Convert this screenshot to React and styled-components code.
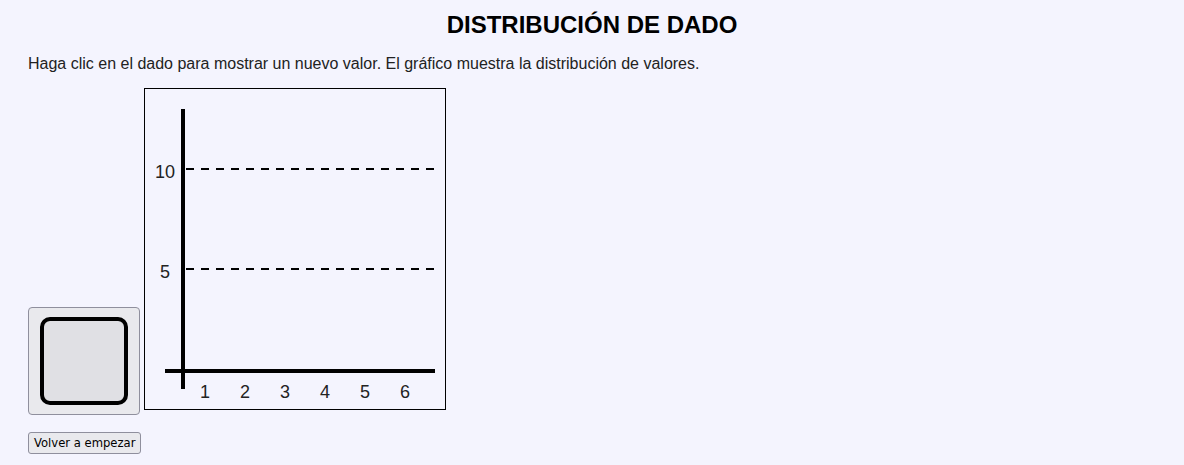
import React from "react";
import styled, { createGlobalStyle } from "styled-components";

const Global = createGlobalStyle`
  html, body { margin: 0; padding: 0; background: #f4f4fe; }
  body { font-family: "Liberation Sans", Arial, sans-serif; color: #000; }
`;

const Page = styled.div`
  padding: 0 28px;
  display: flex;
  flex-direction: column;
  align-items: flex-start;
`;

const Title = styled.h1`
  align-self: stretch;
  margin: 11px 0 0;
  font-size: 24px;
  font-weight: bold;
  line-height: 28px;
  text-align: center;
  color: #000;
`;

const Intro = styled.p`
  margin: 16px 0 0;
  font-size: 16px;
  line-height: 18px;
  color: #222;
`;

const Row = styled.div`
  margin-top: 15px;
  display: flex;
  align-items: flex-end;
  gap: 4px;
`;

const DieButton = styled.button`
  width: 112px;
  height: 108px;
  padding: 0;
  display: flex;
  align-items: center;
  justify-content: center;
  background: #e9e9ed;
  border: 1px solid #8f8f9d;
  border-radius: 4px;
  cursor: pointer;
`;

const ChartBox = styled.div`
  width: 300px;
  height: 320px;
  border: 1px solid #000;
  margin-bottom: 5px;
  & > svg { display: block; }
`;

const ResetButton = styled.button`
  margin-top: 17px;
  height: 22px;
  padding: 0 5px;
  font-family: "DejaVu Sans", sans-serif;
  font-size: 11.6px;
  color: #000;
  background: #e9e9ed;
  border: 1px solid #8f8f9d;
  border-radius: 3px;
  cursor: pointer;
`;

const AxisText = styled.text`
  font-family: "Liberation Sans", Arial, sans-serif;
  font-size: 18px;
  fill: #222;
`;

const Die = () => (
  <svg width="92" height="92" viewBox="0 0 92 92">
    <rect x="4" y="4" width="84" height="84" rx="8" fill="#e0e0e4" stroke="#000" strokeWidth="4" />
  </svg>
);

const Chart = () => (
  <svg width="300" height="320" viewBox="0 0 300 320">
    <line x1="41" y1="80" x2="290" y2="80" stroke="#000" strokeWidth="2" strokeDasharray="8 7" />
    <line x1="41" y1="180" x2="290" y2="180" stroke="#000" strokeWidth="2" strokeDasharray="8 7" />
    <line x1="38" y1="20" x2="38" y2="300" stroke="#000" strokeWidth="4" />
    <line x1="20" y1="282" x2="290" y2="282" stroke="#000" strokeWidth="4" />
    <AxisText x="20" y="89" textAnchor="middle">10</AxisText>
    <AxisText x="20" y="189" textAnchor="middle">5</AxisText>
    {[1, 2, 3, 4, 5, 6].map((n, i) => (
      <AxisText key={n} x={60 + i * 40} y="309" textAnchor="middle">{n}</AxisText>
    ))}
  </svg>
);

export default function App() {
  return (
    <>
      <Global />
      <Page>
        <Title>DISTRIBUCIÓN DE DADO</Title>
        <Intro>Haga clic en el dado para mostrar un nuevo valor. El gráfico muestra la distribución de valores.</Intro>
        <Row>
          <DieButton aria-label="dado"><Die /></DieButton>
          <ChartBox><Chart /></ChartBox>
        </Row>
        <ResetButton>Volver a empezar</ResetButton>
      </Page>
    </>
  );
}
